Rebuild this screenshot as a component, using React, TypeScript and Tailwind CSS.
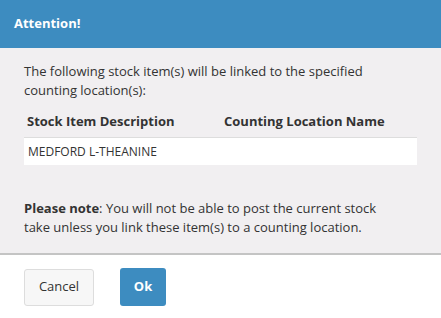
export default function App() {
  return (
    <div className="w-[441px] h-[318px] bg-white flex flex-col" style={{ fontFamily: '"Open Sans", "Noto Sans", sans-serif' }}>
      <div className="h-[48px] bg-[#3d8cc0] flex items-center px-[14px] shrink-0">
        <span className="text-white font-bold text-[13px]">Attention!</span>
      </div>
      <div className="h-[207px] bg-[#f1eff1] border-b-2 border-[#c4c4c4] px-[24px] pt-[14px] text-[13px] text-[#333] leading-[19px]">
        <p className="w-[372px]">The following stock item(s) will be linked to the specified counting location(s):</p>
        <div className="flex mt-[12px] font-bold text-[13px]">
          <div className="w-[200px] pl-[3px]">Stock Item Description</div>
          <div>Counting Location Name</div>
        </div>
        <div className="mt-[6px] h-[28px] bg-white border-t border-[#ddd] flex items-center pl-[4px] text-[12px] text-[#333]">MEDFORD L-THEANINE</div>
        <p className="mt-[34px] w-[372px]"><span className="font-bold">Please note</span>: You will not be able to post the current stock take unless you link these item(s) to a counting location.</p>
      </div>
      <div className="flex items-center gap-[26px] px-[24px] pt-[13px]">
        <button className="w-[70px] h-[37px] bg-[#f7f7f7] border border-[#ddd] rounded-[3px] text-[13px] text-[#333]">Cancel</button>
        <button className="w-[46px] h-[38px] bg-[#3d8cc0] rounded-[3px] text-[13px] font-bold text-white">Ok</button>
      </div>
    </div>
  );
}
